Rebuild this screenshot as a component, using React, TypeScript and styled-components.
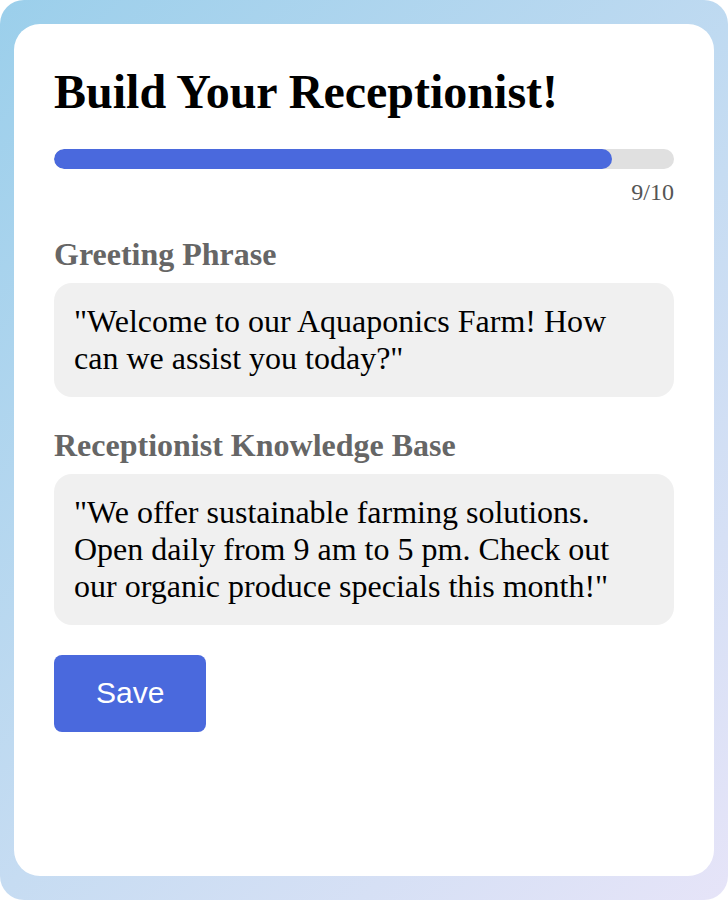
import styled, { createGlobalStyle } from 'styled-components';

const GlobalStyle = createGlobalStyle`
  html, body {
    margin: 0;
    padding: 0;
    background: #ffffff;
  }

  * {
    box-sizing: border-box;
  }
`;

const StyledPage = styled.div`
  display: flex;
  flex-direction: column;

  min-height: 100vh;
  padding: 24px 14px;

  border-radius: 24px;
  background: linear-gradient(135deg, #9bcfeb 0%, #c6dcf2 55%, #e6e4f8 100%);
`;

const StyledCard = styled.div`
  flex: 1;
  display: flex;
  flex-direction: column;

  padding: 40px;

  border-radius: 26px;
  background: #ffffff;
  font-family: 'Liberation Serif', 'Times New Roman', serif;
`;

const StyledTitle = styled.h1`
  margin: 0 0 30px;

  font-size: 48px;
  font-weight: 700;
  color: #000000;
`;

const StyledTrack = styled.div`
  height: 20px;

  border-radius: 10px;
  background: #e0e0e0;
  overflow: hidden;
`;

const StyledFill = styled.div`
  height: 100%;

  border-radius: 10px;
  background: #4a69dd;
`;

const StyledStep = styled.p`
  margin: 10px 0 30px;

  text-align: right;
  font-size: 24px;
  color: #555555;
`;

const StyledField = styled.div`
  display: flex;
  flex-direction: column;

  margin-bottom: 30px;
`;

const StyledLabel = styled.label`
  margin-bottom: 10px;

  font-size: 32px;
  font-weight: 700;
  color: #666666;
`;

const StyledBox = styled.div`
  padding: 20px;

  border-radius: 18px;
  background: #f0f0f0;
  font-size: 32px;
  color: #000000;
`;

const StyledSave = styled.button`
  align-self: flex-start;

  padding: 21px 42px 22px;

  border: none;
  border-radius: 8px;
  background: #4a69dd;
  font-family: 'Liberation Sans', Arial, sans-serif;
  font-size: 30px;
  color: #ffffff;

  cursor: pointer;
`;

const fields = [
  {
    label: 'Greeting Phrase',
    text: '"Welcome to our Aquaponics Farm! How can we assist you today?"',
  },
  {
    label: 'Receptionist Knowledge Base',
    text: '"We offer sustainable farming solutions. Open daily from 9 am to 5 pm. Check out our organic produce specials this month!"',
  },
];

export default function App() {
  const step = 9;
  const total = 10;

  return (
    <>
      <GlobalStyle />
      <StyledPage>
        <StyledCard>
          <StyledTitle>Build Your Receptionist!</StyledTitle>
          <StyledTrack>
            <StyledFill style={{ width: `${(step / total) * 100}%` }} />
          </StyledTrack>
          <StyledStep>
            {step}/{total}
          </StyledStep>
          {fields.map((field) => (
            <StyledField key={field.label}>
              <StyledLabel>{field.label}</StyledLabel>
              <StyledBox>{field.text}</StyledBox>
            </StyledField>
          ))}
          <StyledSave>Save</StyledSave>
        </StyledCard>
      </StyledPage>
    </>
  );
}
